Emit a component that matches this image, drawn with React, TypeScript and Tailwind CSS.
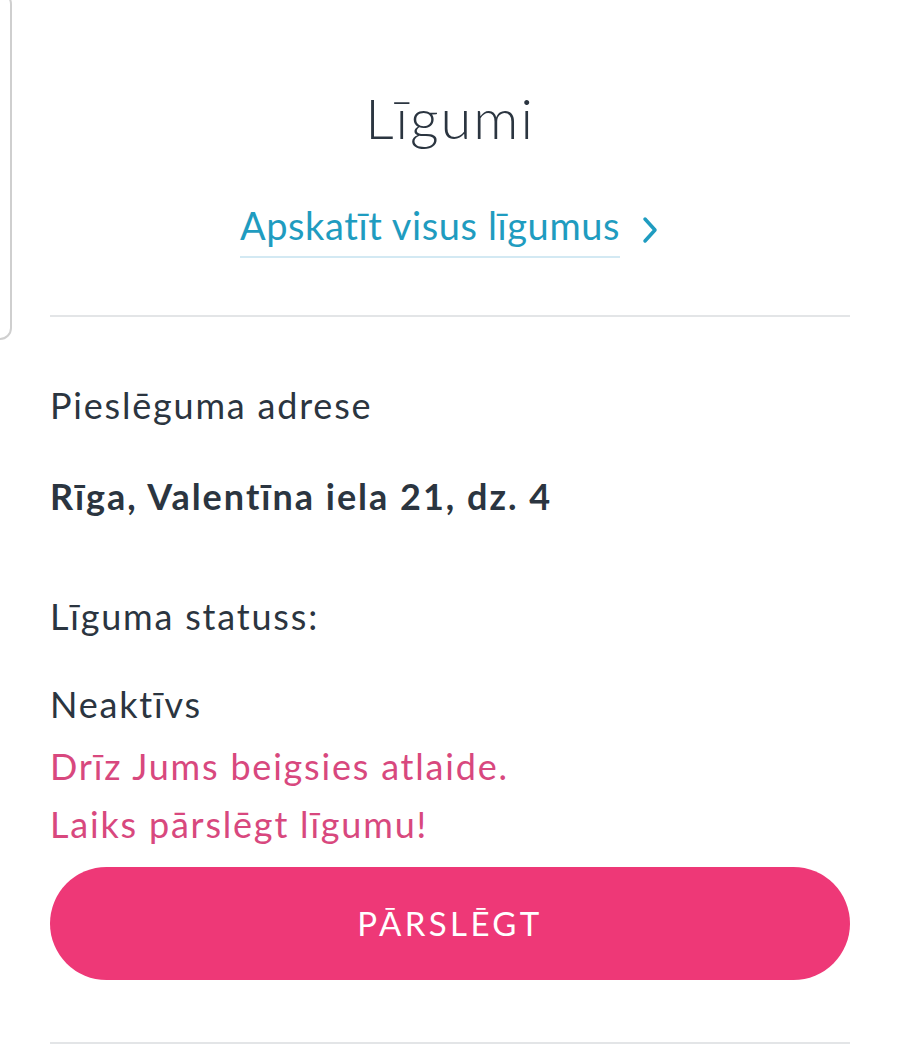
import React from "react";

const Chevron = () => (
  <svg width="20" height="28" viewBox="0 0 20 28" fill="none" className="ml-[20px] mb-[14px]">
    <path d="M5 3 L15 14 L5 25" stroke="#1f9cc0" strokeWidth="3.5" strokeLinecap="round" strokeLinejoin="round" />
  </svg>
);

export default function App() {
  return (
    <div className="relative min-h-screen bg-white overflow-hidden font-['Lato','Open_Sans',sans-serif] text-[#2b3540]">
      {/* edge of a neighbouring card peeking in */}
      <div className="absolute -left-[24px] -top-[8px] w-[36px] h-[348px] rounded-[12px] border-2 border-[#cfcfcf]" />

      <div className="flex flex-col px-[50px]">
        <h1 className="mt-[86px] text-center text-[56px] leading-[64px] font-light tracking-[2px]">Līgumi</h1>

        <div className="mt-[51px] flex justify-center items-end">
          <a className="border-b-2 border-[#d3e9f3] pb-[7px] text-[38px] leading-[48px] tracking-[0.6px] text-[#1f9cc0]">
            Apskatīt visus līgumus
          </a>
          <Chevron />
        </div>

        <div className="mt-[57px] h-[2px] bg-[#e3e5e7]" />

        <div className="tracking-[1.8px]">
          <p className="mt-[64px] text-[36px] leading-[48px]">Pieslēguma adrese</p>
          <p className="mt-[43px] text-[36px] leading-[48px] font-bold tracking-[2px]">Rīga, Valentīna iela 21, dz. 4</p>

          <p className="mt-[72px] text-[36px] leading-[48px]">Līguma statuss:</p>

          <div className="mt-[35px] flex flex-col text-[36px] leading-[58px]">
            <span>Neaktīvs</span>
            <span className="mt-[4px] text-[#d8487e]">Drīz Jums beigsies atlaide.</span>
            <span className="text-[#d8487e]">Laiks pārslēgt līgumu!</span>
          </div>
        </div>

        <button className="mt-[14px] h-[113px] w-full rounded-full bg-[#ee3877] text-white text-[33px] tracking-[3.4px]">
          PĀRSLĒGT
        </button>

        <div className="mt-[62px] h-[2px] bg-[#e3e5e7]" />
      </div>
    </div>
  );
}
